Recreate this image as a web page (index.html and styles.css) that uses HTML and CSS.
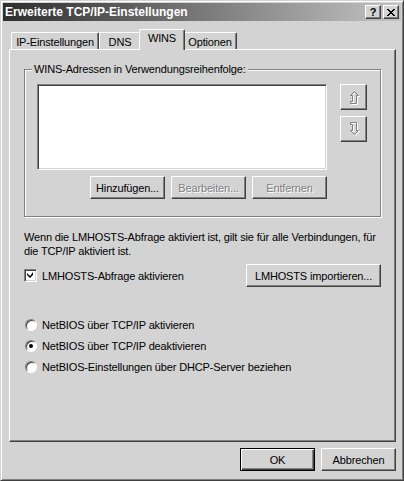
FILE: index.html
```html
<!DOCTYPE html>
<html lang="de">
<head>
  <meta charset="UTF-8">
  <title>Erweiterte TCP/IP-Einstellungen</title>
  <link rel="stylesheet" href="styles.css">
</head>
<body>

<div class="window">
  <div class="titlebar">
    <span class="title">Erweiterte TCP/IP-Einstellungen</span>
    <span class="title-btn help">?</span>
    <span class="title-btn close">
      <svg width="8" height="7" viewBox="0 0 8 7"><path d="M0 0h2v1h1v1h2V1h1V0h2v1H7v1H6v1H5v1h1v1h1v1h1v1H6V6H5V5H3v1H2v1H0V6h1V5h1V4h1V3H2V2H1V1H0z" fill="#000"/></svg>
    </span>
  </div>

  <div class="tabs">
    <div class="tab tab-ip">IP-Einstellungen</div>
    <div class="tab tab-dns">DNS</div>
    <div class="tab tab-wins active">WINS</div>
    <div class="tab tab-opt">Optionen</div>
  </div>

  <div class="panel">
    <div class="group">
      <span class="legend">WINS-Adressen in Verwendungsreihenfolge:</span>
      <div class="list-row">
        <div class="listbox"></div>
        <div class="arrows">
          <button class="btn arrow-btn" disabled>
            <svg width="11" height="15" viewBox="0 0 11 15">
              <path d="M5.5 1.5L9.5 5.5H7.5V13.5H1.5V11.5H3.5V5.5H1.5Z" transform="translate(1 1)" fill="none" stroke="#fff"/>
              <path d="M5.5 1.5L9.5 5.5H7.5V13.5H1.5V11.5H3.5V5.5H1.5Z" fill="none" stroke="#808080"/>
            </svg>
          </button>
          <button class="btn arrow-btn" disabled>
            <svg width="11" height="15" viewBox="0 0 11 15">
              <path d="M1.5 0.5H7.5V8.5H9.5L5.5 12.5L1.5 8.5H3.5V2.5H1.5Z" transform="translate(1 1)" fill="none" stroke="#fff"/>
              <path d="M1.5 0.5H7.5V8.5H9.5L5.5 12.5L1.5 8.5H3.5V2.5H1.5Z" fill="none" stroke="#808080"/>
            </svg>
          </button>
        </div>
      </div>
      <div class="btn-row">
        <button class="btn">Hinzufügen...</button>
        <button class="btn" disabled>Bearbeiten...</button>
        <button class="btn" disabled>Entfernen</button>
      </div>
    </div>

    <p class="note">Wenn die LMHOSTS-Abfrage aktiviert ist, gilt sie für alle Verbindungen, für<br>die TCP/IP aktiviert ist.</p>

    <div class="check-row">
      <label class="check">
        <span class="checkbox">
          <svg width="7" height="7" viewBox="0 0 7 7"><path d="M6 0v3L3 6 0 3V1l3 3 3-4z" fill="#000"/></svg>
        </span>
        LMHOSTS-Abfrage aktivieren
      </label>
      <button class="btn btn-import">LMHOSTS importieren...</button>
    </div>

    <div class="radios">
      <label class="radio"><span class="radio-circle"></span>NetBIOS über TCP/IP aktivieren</label>
      <label class="radio"><span class="radio-circle checked"></span>NetBIOS über TCP/IP deaktivieren</label>
      <label class="radio"><span class="radio-circle"></span>NetBIOS-Einstellungen über DHCP-Server beziehen</label>
    </div>
  </div>

  <div class="footer">
    <button class="btn default">OK</button>
    <button class="btn">Abbrechen</button>
  </div>
</div>

</body>
</html>
```

FILE: styles.css
```css
* {
  box-sizing: border-box;
}
body {
  margin: 0;
  background: #d3d3d3;
  font-family: "Liberation Sans", Arial, sans-serif;
  font-size: 11px;
  letter-spacing: -0.15px;
  color: #000;
}
.window {
  width: 404px;
  height: 481px;
  padding: 2px;
  background: #d3d3d3;
  border: 1px solid;
  border-color: #d3d3d3 #404040 #404040 #d3d3d3;
  box-shadow: inset 1px 1px #fff, inset -1px -1px #808080;
  display: flex;
  flex-direction: column;
}

/* title bar */
.titlebar {
  height: 18px;
  display: flex;
  align-items: center;
  padding: 0 2px 0 2px;
  background: linear-gradient(to right, #2e2e2e, #c4c4c4);
  color: #fff;
}
.title {
  font-weight: bold;
  font-size: 12px;
  letter-spacing: 0;
  margin-right: auto;
}
.title-btn {
  width: 16px;
  height: 14px;
  display: flex;
  align-items: center;
  justify-content: center;
  background: #d3d3d3;
  border: 1px solid;
  border-color: #fff #404040 #404040 #fff;
  box-shadow: inset -1px -1px #808080;
  color: #000;
  font-weight: bold;
  font-size: 11px;
  line-height: 1;
}
.close {
  margin-left: 2px;
}

/* tabs */
.tabs {
  display: flex;
  align-items: flex-end;
  height: 20px;
  margin-top: 8px;
  padding-left: 8px;
  position: relative;
  z-index: 1;
}
.tab {
  height: 17px;
  padding-top: 3px;
  text-align: center;
  border: 1px solid;
  border-bottom: none;
  border-color: #fff #404040 #404040 #fff;
  border-radius: 2px 2px 0 0;
  box-shadow: inset -1px 0 #808080;
  background: #d3d3d3;
}
.tab-ip { width: 88px; }
.tab-dns { width: 42px; }
.tab-wins { width: 42px; }
.tab-opt { width: 54px; }
.tab.active {
  width: 46px;
  height: 21px;
  margin: 0 -2px -1px -2px;
  padding-top: 2px;
  position: relative;
}

/* tab page */
.panel {
  width: 387px;
  height: 393px;
  margin-left: 6px;
  padding: 19px 0 0 14px;
  border: 1px solid;
  border-color: #fff #404040 #404040 #fff;
  box-shadow: inset -1px -1px #808080;
}
.group {
  position: relative;
  width: 357px;
  height: 148px;
  padding: 14px 13px 0 12px;
  border: 1px solid #808080;
  box-shadow: inset 1px 1px #fff, 1px 1px #fff;
}
.legend {
  position: absolute;
  top: -7px;
  left: 7px;
  padding: 0 2px;
  background: #d3d3d3;
  line-height: 13px;
}
.list-row {
  display: flex;
}
.listbox {
  width: 290px;
  height: 86px;
  background: #fff;
  border: 1px solid;
  border-color: #808080 #fff #fff #808080;
  box-shadow: inset 1px 1px #404040, inset -1px -1px #d3d3d3;
}
.arrows {
  display: flex;
  flex-direction: column;
  gap: 6px;
  margin-left: 13px;
}
.btn {
  font-family: "Liberation Sans", Arial, sans-serif;
  font-size: 11px;
  letter-spacing: -0.15px;
  color: #000;
  width: 75px;
  height: 23px;
  padding: 0;
  background: #d3d3d3;
  border: 1px solid;
  border-color: #fff #404040 #404040 #fff;
  border-radius: 0;
  box-shadow: inset -1px -1px #808080;
}
.btn:disabled {
  color: #808080;
  text-shadow: 1px 1px #fff;
}
.arrow-btn {
  width: 27px;
  height: 26px;
  display: flex;
  align-items: center;
  justify-content: center;
  padding: 1px 0 0 2px;
}
.btn-row {
  display: flex;
  gap: 6px;
  width: 290px;
  margin-top: 6px;
  justify-content: flex-end;
}

.note {
  margin: 13px 0 0 0;
  line-height: 14px;
}
.check-row {
  display: flex;
  align-items: center;
  width: 357px;
  margin-top: 6px;
}
.check {
  display: flex;
  align-items: center;
  gap: 5px;
  margin-right: auto;
}
.checkbox {
  width: 13px;
  height: 13px;
  display: flex;
  align-items: center;
  justify-content: center;
  background: #fff;
  border: 1px solid;
  border-color: #808080 #fff #fff #808080;
  box-shadow: inset 1px 1px #404040, inset -1px -1px #d3d3d3;
}
.btn-import {
  width: 135px;
}
.radios {
  margin-top: 27px;
}
.radio {
  display: flex;
  align-items: center;
  height: 21px;
  gap: 5px;
}
.radio-circle {
  width: 12px;
  height: 12px;
  margin-left: 1px;
  border-radius: 50%;
  background: #fff;
  border: 1px solid;
  border-color: #808080 #fff #fff #808080;
  box-shadow: inset 1px 1px #404040;
  display: flex;
  align-items: center;
  justify-content: center;
}
.radio-circle.checked::after {
  content: "";
  width: 4px;
  height: 4px;
  border-radius: 50%;
  background: #000;
}

.footer {
  display: flex;
  justify-content: flex-end;
  gap: 6px;
  width: 387px;
  margin: 6px 0 0 6px;
}
.btn.default {
  border-color: #000;
  box-shadow: inset 1px 1px #fff, inset -1px -1px #404040, inset -2px -2px #808080;
}
```
